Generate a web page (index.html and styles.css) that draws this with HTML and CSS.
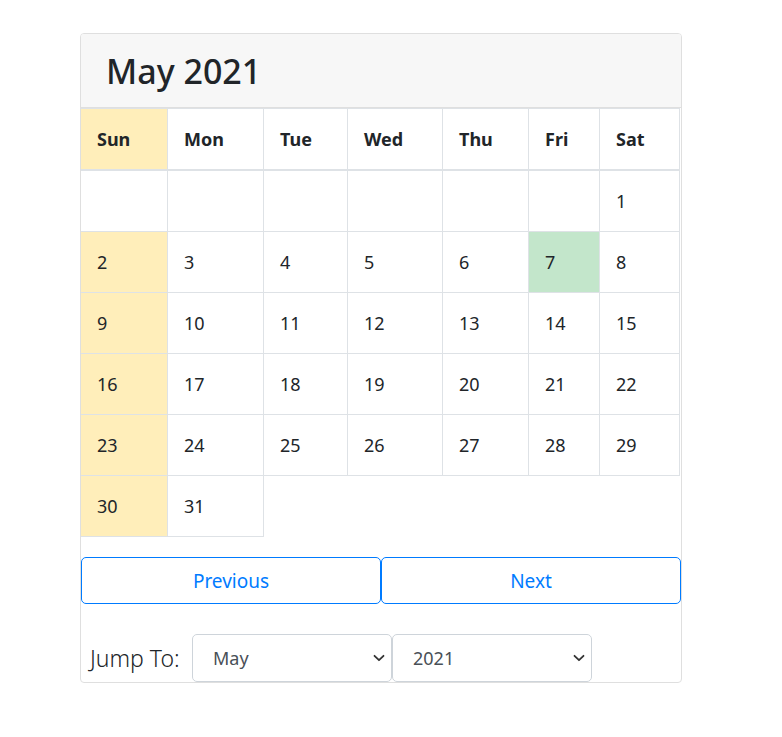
FILE: index.html
```html
<!DOCTYPE html>
<html lang="en">
<head>
<meta charset="utf-8">
<title>Calendar</title>
<link rel="stylesheet" href="styles.css">
</head>
<body>
<div class="card">
  <div class="card-header"><h1 class="title">May 2021</h1></div>
  <div class="cal">
    <div class="th sun">Sun</div>
    <div class="th">Mon</div>
    <div class="th">Tue</div>
    <div class="th">Wed</div>
    <div class="th">Thu</div>
    <div class="th">Fri</div>
    <div class="th">Sat</div>

    <div class="td"></div><div class="td"></div><div class="td"></div><div class="td"></div><div class="td"></div><div class="td"></div><div class="td">1</div>
    <div class="td sun">2</div><div class="td">3</div><div class="td">4</div><div class="td">5</div><div class="td">6</div><div class="td today">7</div><div class="td">8</div>
    <div class="td sun">9</div><div class="td">10</div><div class="td">11</div><div class="td">12</div><div class="td">13</div><div class="td">14</div><div class="td">15</div>
    <div class="td sun">16</div><div class="td">17</div><div class="td">18</div><div class="td">19</div><div class="td">20</div><div class="td">21</div><div class="td">22</div>
    <div class="td sun">23</div><div class="td">24</div><div class="td">25</div><div class="td">26</div><div class="td">27</div><div class="td">28</div><div class="td">29</div>
    <div class="td sun">30</div><div class="td">31</div>
  </div>
  <div class="nav">
    <button class="btn">Previous</button>
    <button class="btn">Next</button>
  </div>
  <div class="jump">
    <label class="jump-label" for="month">Jump To:</label>
    <select class="sel" id="month">
      <option>Jan</option><option>Feb</option><option>Mar</option><option>Apr</option>
      <option selected>May</option><option>Jun</option><option>Jul</option><option>Aug</option>
      <option>Sep</option><option>Oct</option><option>Nov</option><option>Dec</option>
    </select>
    <select class="sel" id="year">
      <option>2020</option><option selected>2021</option><option>2022</option>
    </select>
  </div>
</div>
</body>
</html>
```

FILE: styles.css
```css
* { box-sizing: border-box; }
html, body { margin: 0; padding: 0; background: #fff; }
body {
  font-family: "Noto Sans", "Open Sans", sans-serif;
  color: #212529;
  padding: 33px 0 0 80px;
}
.card {
  width: 602px;
  height: 650px;
  border: 1px solid #dfdfdf;
  border-radius: 4px;
  display: flex;
  flex-direction: column;
  overflow: hidden;
}
.card-header {
  height: 74px;
  background: #f7f7f7;
  border-bottom: 1px solid #dfdfdf;
  display: flex;
  align-items: center;
  padding-left: 25px;
  flex-shrink: 0;
}
.title {
  margin: 0;
  font-size: 34px;
  font-weight: 500;
  line-height: 1;
  color: #212529;
}
.cal {
  display: grid;
  grid-template-columns: 87px 96px 84px 95px 86px 71px 80px;
  width: 599px;
}
.th, .td {
  border-right: 1px solid #dee2e6;
  border-bottom: 1px solid #dee2e6;
  display: flex;
  align-items: center;
  padding-left: 16px;
  font-size: 18px;
}
.th {
  height: 63px;
  border-top: 1px solid #dee2e6;
  border-bottom-width: 2px;
  font-weight: 700;
}
.td {
  height: 61px;
  font-weight: 400;
}
.sun { background: #ffeeba; }
.today { background: #c3e6cb; }
.nav {
  display: flex;
  margin-top: 20px;
}
.btn {
  width: 300px;
  height: 47px;
  border: 1px solid #007bff;
  border-radius: 5px;
  background: #fff;
  color: #007bff;
  font-family: inherit;
  font-size: 19px;
  padding: 0;
}
.jump {
  display: flex;
  align-items: center;
  margin-top: 30px;
}
.jump-label {
  font-size: 23px;
  font-weight: 300;
  color: #212529;
  padding-left: 9px;
  width: 111px;
}
.sel {
  appearance: none;
  -webkit-appearance: none;
  width: 200px;
  height: 48px;
  border: 1px solid #ced4da;
  border-radius: 5px;
  background: #fff url("data:image/svg+xml,%3Csvg xmlns='http://www.w3.org/2000/svg' width='12' height='8' viewBox='0 0 12 8'%3E%3Cpath d='M1.5 1.8 6 6.2 10.5 1.8' fill='none' stroke='%23333' stroke-width='1.8' stroke-linecap='round' stroke-linejoin='round'/%3E%3C/svg%3E") no-repeat right 6px center;
  font-family: inherit;
  font-size: 18px;
  color: #495057;
  padding: 0 0 0 20px;
}
```
